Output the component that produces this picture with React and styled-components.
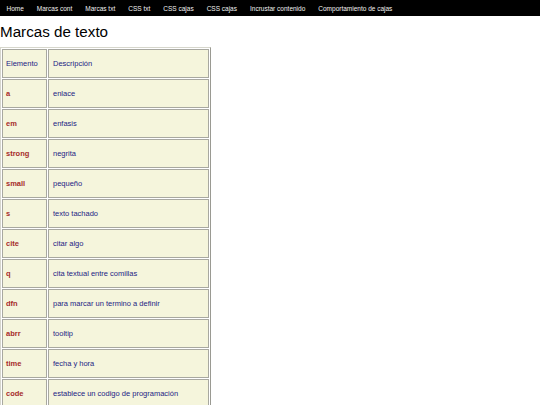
import styled, {createGlobalStyle} from "styled-components";

const links = [
  "Home", "Marcas cont", "Marcas txt", "CSS txt", "CSS cajas", "CSS cajas",
  "Incrustar contenido", "Comportamiento de cajas",
];

const rows = [
  ["a", "enlace"],
  ["em", "enfasis"],
  ["strong", "negrita"],
  ["small", "pequeño"],
  ["s", "texto tachado"],
  ["cite", "citar algo"],
  ["q", "cita textual entre comillas"],
  ["dfn", "para marcar un termino a definir"],
  ["abrr", "tooltip"],
  ["time", "fecha y hora"],
  ["code", "establece un codigo de programación"],
];

export default function App() {
  return (
    <>
      <Global/>
      <Nav>
        {links.map((l, i) => <NavLink key={i} href="#">{l}</NavLink>)}
      </Nav>
      <Title>Marcas de texto</Title>
      <Table>
        <tbody>
          <tr>
            <Cell $first>Elemento</Cell>
            <Cell>Descripción</Cell>
          </tr>
          {rows.map(([tag, desc]) => (
            <tr key={tag}>
              <Cell $first $tag>{tag}</Cell>
              <Cell>{desc}</Cell>
            </tr>
          ))}
        </tbody>
      </Table>
    </>
  );
}

const Global = createGlobalStyle`
  body {
    margin: 0;
    background: white;
    font-family: "Liberation Sans", Arial, sans-serif;
  }
`;

const Nav = styled.nav`
  display: flex;
  align-items: center;
  height: 16px;
  background: black;
`;

const NavLink = styled.a`
  color: #f2f2f2;
  text-decoration: none;
  font-size: 6.5px;
  padding: 0 6.5px;
`;

const Title = styled.h1`
  font-size: 15.2px;
  font-weight: normal;
  margin: 7px 0 6px;
  line-height: 18px;
`;

const Table = styled.table`
  border-collapse: separate;
  border-spacing: 1px;
  width: 211px;
  border: 1px solid;
  border-color: #d6d6cc #9a9a92 #9a9a92 #d6d6cc;
`;

const Cell = styled.td`
  box-sizing: border-box;
  height: 29px;
  width: ${p => p.$first ? "45px" : "auto"};
  padding: 0 3px 0 ${p => p.$first ? "3px" : "4px"};
  background: #f5f5dc;
  border: 1px solid #a8a8a0;
  font-size: 7.5px;
  color: ${p => p.$tag ? "#a52a2a" : "#1c1c84"};
  font-weight: ${p => p.$tag ? "bold" : "normal"};
`;
